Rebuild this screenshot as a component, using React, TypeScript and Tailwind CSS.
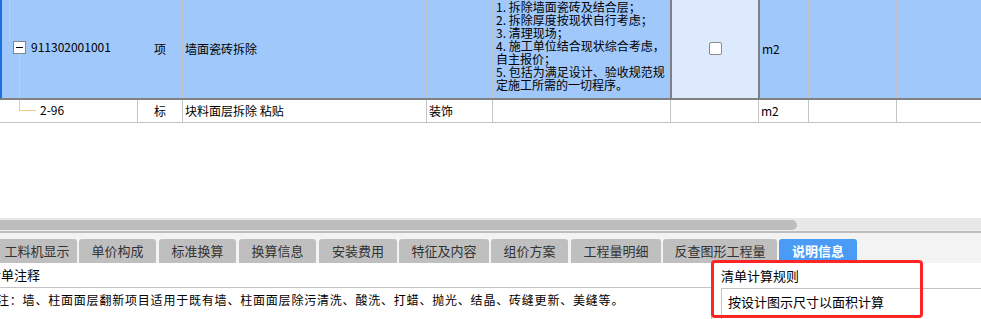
import React from "react";

const FONT = "font-['Noto_Sans_CJK_SC','Noto_Sans',sans-serif]";

const TABS = [
  { name: "工料机显示", cls: "w-[80px] -ml-[3px]" },
  { name: "单价构成", cls: "w-[77px] ml-[2px]" },
  { name: "标准换算", cls: "w-[77px] ml-[3px]" },
  { name: "换算信息", cls: "w-[77px] ml-[3px]" },
  { name: "安装费用", cls: "w-[78px] ml-[3px]" },
  { name: "特征及内容", cls: "w-[90px] ml-[2px]" },
  { name: "组价方案", cls: "w-[77px] ml-[2px]" },
  { name: "工程量明细", cls: "w-[90px] ml-[3px]" },
  { name: "反查图形工程量", cls: "w-[114px] ml-[2px]" },
  { name: "说明信息", cls: "w-[78px] ml-[2px]", active: true },
];

const DESC = [
  "1. 拆除墙面瓷砖及结合层；",
  "2. 拆除厚度按现状自行考虑；",
  "3. 清理现场；",
  "4. 施工单位结合现状综合考虑，自主报价；",
  "5. 包括为满足设计、验收规范规定施工所需的一切程序。",
];

const App = () => {
  return (
    <div className={`w-[981px] h-[319px] overflow-hidden bg-white flex flex-col text-black ${FONT}`}>
      {/* grid */}
      <div className="h-[218px] flex flex-col text-[12px]">
        {/* selected row */}
        <div className="h-[100px] flex bg-[#a0c8fb] border-b-2 border-[#808080] relative">
          <div className="absolute left-0 top-0 bottom-0 w-[2px] bg-[#1a6fe6]" />
          <div className="w-[138px] border-r border-[#c4c4c4] relative">
            <div className="absolute left-[9px] top-0 h-[41px] w-px bg-[#f8c880]" />
            <div className="absolute left-[13px] top-[41px] w-[13px] h-[13px] border border-[#858585] bg-white flex items-center justify-center">
              <div className="w-[7px] h-px bg-black" />
            </div>
            <div className="absolute left-[19px] top-[54px] bottom-0 w-px bg-[#f8c880]" />
            <span className="absolute left-[31px] top-[39px] leading-[16px]">911302001001</span>
          </div>
          <div className="w-[45px] border-r border-[#c4c4c4] flex items-center justify-center leading-[16px]">项</div>
          <div className="w-[244px] border-r border-[#c4c4c4] flex items-center pl-[2px] leading-[16px]">墙面瓷砖拆除</div>
          <div className="w-[66px] border-r border-[#c4c4c4]" />
          <div className="w-[177px] overflow-hidden flex flex-col justify-end pl-[3px] pb-[7px] leading-[13px]">
            {DESC.map((d) => (
              <p key={d}>{d}</p>
            ))}
          </div>
          <div className="w-[90px] bg-[#dde9fc] border-x-2 border-[#808080] flex items-center justify-center">
            <div className="w-[13px] h-[13px] mb-[2px] rounded-[2px] border border-[#8a8a8a] bg-white" />
          </div>
          <div className="w-[49px] border-r border-[#c4c4c4] flex items-center pl-[2px] leading-[16px]">m2</div>
          <div className="w-[88px] border-r border-[#c4c4c4]" />
          <div className="flex-1" />
        </div>
        {/* child row */}
        <div className="h-[23px] flex border-b border-[#c4c4c4]">
          <div className="w-[138px] border-r border-[#c4c4c4] relative">
            <div className="absolute left-[19px] top-0 h-[10px] w-px bg-[#f8c880]" />
            <div className="absolute left-[19px] top-[10px] w-[17px] h-px bg-[#f8c880]" />
            <span className="absolute left-[40px] top-[2px] leading-[16px]">2-96</span>
          </div>
          <div className="w-[45px] border-r border-[#c4c4c4] flex items-center justify-center">标</div>
          <div className="w-[244px] border-r border-[#c4c4c4] flex items-center pl-[2px]">块料面层拆除 粘贴</div>
          <div className="w-[66px] border-r border-[#c4c4c4] flex items-center pl-[2px]">装饰</div>
          <div className="w-[178px] border-r border-[#c4c4c4]" />
          <div className="w-[88px] border-r border-[#c4c4c4]" />
          <div className="w-[50px] border-r border-[#c4c4c4] flex items-center pl-[2px]">m2</div>
          <div className="w-[88px] border-r border-[#c4c4c4]" />
          <div className="flex-1" />
        </div>
        <div className="flex-1" />
      </div>

      {/* horizontal scrollbar */}
      <div className="h-[12px] bg-[#e8e8e8] pt-[2px]">
        <div className="w-[797px] h-[10px] bg-[#bdbdbd] rounded-r-[5px]" />
      </div>
      <div className="h-[1px] bg-[#f0f0f0]" />
      <div className="h-[2px] bg-[#bdbdbd]" />

      {/* tabs */}
      <div className="h-[30px] bg-[#f3f3f3] flex items-end pt-[6px] text-[13px]">
        {TABS.map((t) => (
          <div
            key={t.name}
            className={`${t.cls} h-[24px] shrink-0 rounded-t-[3px] flex items-center justify-center ${
              t.active ? "bg-[#4a9bf6] text-white font-bold" : "bg-[#bfbfbf] text-[#333]"
            }`}
          >
            {t.name}
          </div>
        ))}
      </div>

      {/* bottom panels */}
      <div className="flex-1 flex">
        <div className="w-[712px] border-r border-[#c4c4c4] overflow-hidden">
          <div className="h-[25px] border-b border-[#c4c4c4] flex items-center text-[13px] -ml-[12px]">
            清单注释
          </div>
          <div className="h-[23px] flex items-center text-[12px] tracking-[0.8px] -ml-[3px] whitespace-nowrap">
            注：墙、柱面面层翻新项目适用于既有墙、柱面面层除污清洗、酸洗、打蜡、抛光、结晶、砖缝更新、美缝等。
          </div>
        </div>
        <div className="flex-1 relative pl-[9px] text-[13px]">
          <div className="h-[25px] flex items-center">清单计算规则</div>
          <div className="h-[31px] border-l border-t border-[#c4c4c4] flex items-center pl-[6px] pb-[4px]">
            按设计图示尺寸以面积计算
          </div>
          <div className="absolute -left-px -top-[3px] w-[212px] h-[58px] border-[3px] border-[#ff2525] rounded-[4px] pointer-events-none" />
        </div>
      </div>
    </div>
  );
};

export default App;
